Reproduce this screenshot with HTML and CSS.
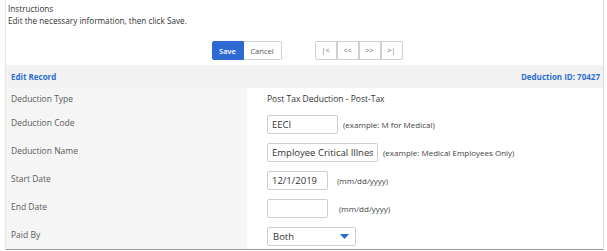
FILE: index.html
```html
<!DOCTYPE html>
<html>
<head>
<meta charset="utf-8">
<link rel="stylesheet" href="styles.css">
</head>
<body>
<div class="panel">
  <div class="instructions">
    <div class="ins-title">Instructions</div>
    <div class="ins-text">Edit the necessary information, then click Save.</div>
  </div>
  <div class="actions">
    <div class="btn-group">
      <button class="btn btn-primary">Save</button>
      <button class="btn">Cancel</button>
    </div>
    <div class="btn-group nav">
      <button class="btn nav-btn">|&lt;</button>
      <button class="btn nav-btn">&lt;&lt;</button>
      <button class="btn nav-btn">&gt;&gt;</button>
      <button class="btn nav-btn">&gt;|</button>
    </div>
  </div>
  <div class="section-head">
    <span>Edit Record</span>
    <span>Deduction ID: 70427</span>
  </div>
  <div class="form">
    <div class="row row-static">
      <div class="label">Deduction Type</div>
      <div class="field"><span class="value">Post Tax Deduction - Post-Tax</span></div>
    </div>
    <div class="row">
      <div class="label">Deduction Code</div>
      <div class="field"><input class="input w-code" value="EECI"><span class="hint">(example: M for Medical)</span></div>
    </div>
    <div class="row">
      <div class="label">Deduction Name</div>
      <div class="field"><input class="input w-name" value="Employee Critical Illness"><span class="hint hint-tight">(example: Medical Employees Only)</span></div>
    </div>
    <div class="row">
      <div class="label">Start Date</div>
      <div class="field"><input class="input w-date" value="12/1/2019"><span class="hint hint-date">(mm/dd/yyyy)</span></div>
    </div>
    <div class="row">
      <div class="label">End Date</div>
      <div class="field"><input class="input w-date" value=""><span class="hint hint-wide">(mm/dd/yyyy)</span></div>
    </div>
    <div class="row">
      <div class="label">Paid By</div>
      <div class="field">
        <div class="select">
          <span>Both</span>
          <svg width="9" height="5" viewBox="0 0 9 5"><path d="M0 0H9L4.5 5Z" fill="#2a6bd1"/></svg>
        </div>
      </div>
    </div>
  </div>
</div>
</body>
</html>
```

FILE: styles.css
```css
* { box-sizing: border-box; }
body {
  margin: 0;
  font-family: "Open Sans", "Liberation Sans", sans-serif;
  color: #333;
  background: #fff;
}
.panel {
  margin-left: 5px;
  width: 599px;
  height: 250px;
  border-left: 1px solid #e8e8e8;
  border-right: 1px solid #dcdcdc;
  border-bottom: 1px solid #9a9a9a;
  box-shadow: 0 1px 1px rgba(0,0,0,0.15);
  overflow: hidden;
}
.instructions {
  padding: 3px 2px 0;
  font-size: 8.2px;
  line-height: 12px;
  color: #333;
  height: 27px;
}
.actions {
  display: flex;
  justify-content: center;
  gap: 33px;
  padding-top: 14px;
  padding-left: 5px;
  height: 38px;
}
.btn-group {
  display: flex;
  height: 19px;
}
.btn {
  font-family: inherit;
  font-size: 7.5px;
  color: #555;
  background: #fff;
  border: 1px solid #cfcfcf;
  margin: 0;
  padding: 0 8px;
  height: 19px;
  border-radius: 0;
}
.btn-group .btn:first-child { border-radius: 2px 0 0 2px; }
.btn-group .btn:last-child { border-radius: 0 2px 2px 0; }
.btn + .btn { border-left: none; }
.btn-primary {
  background: #2d6ad3;
  border-color: #2d6ad3;
  color: #fff;
  font-weight: 600;
  width: 32px;
  padding: 0;
}
.btn-primary + .btn { width: 38px; padding: 0; }
.nav-btn { width: 22px; padding: 0; color: #666; font-size: 7px; }
.nav .btn + .btn { border-left: 1px solid #cfcfcf; }
.section-head {
  display: flex;
  justify-content: space-between;
  align-items: center;
  height: 23px;
  background: #f2f2f2;
  padding: 0 3px 0 5px;
  font-size: 8px;
  font-weight: 700;
  color: #2b6ed4;
}
.form {
  display: grid;
  grid-template-columns: 241px 1fr;
}
.row { display: contents; }
.label {
  background: #f5f5f5;
  font-size: 8.5px;
  color: #5a5a5a;
  padding: 7px 0 0 5px;
  height: 28px;
  line-height: 12px;
}
.row-static .label { height: 22px; padding-top: 5px; }
.field {
  display: flex;
  align-items: center;
  padding-left: 20px;
  height: 28px;
  font-size: 8.5px;
}
.row-static .field { height: 22px; padding-bottom: 2px; }
.value { color: #333; }
.input {
  font-family: inherit;
  font-size: 9.5px;
  color: #333;
  border: 1px solid #cfcfcf;
  border-radius: 2px;
  height: 19px;
  padding: 0 4px;
  margin: 0;
  outline: none;
}
.w-code { width: 71px; }
.w-name { width: 111px; }
.w-date { width: 61px; }
.hint { font-size: 8px; color: #444; margin-left: 5px; }
.hint-tight { margin-left: 5px; }
.hint-date { margin-left: 9px; }
.hint-wide { margin-left: 11px; }
.select {
  width: 89px;
  height: 19px;
  border: 1px solid #cfcfcf;
  border-radius: 2px;
  display: flex;
  align-items: center;
  justify-content: space-between;
  padding: 0 6px 0 5px;
  font-size: 9.5px;
  color: #333;
}
```
